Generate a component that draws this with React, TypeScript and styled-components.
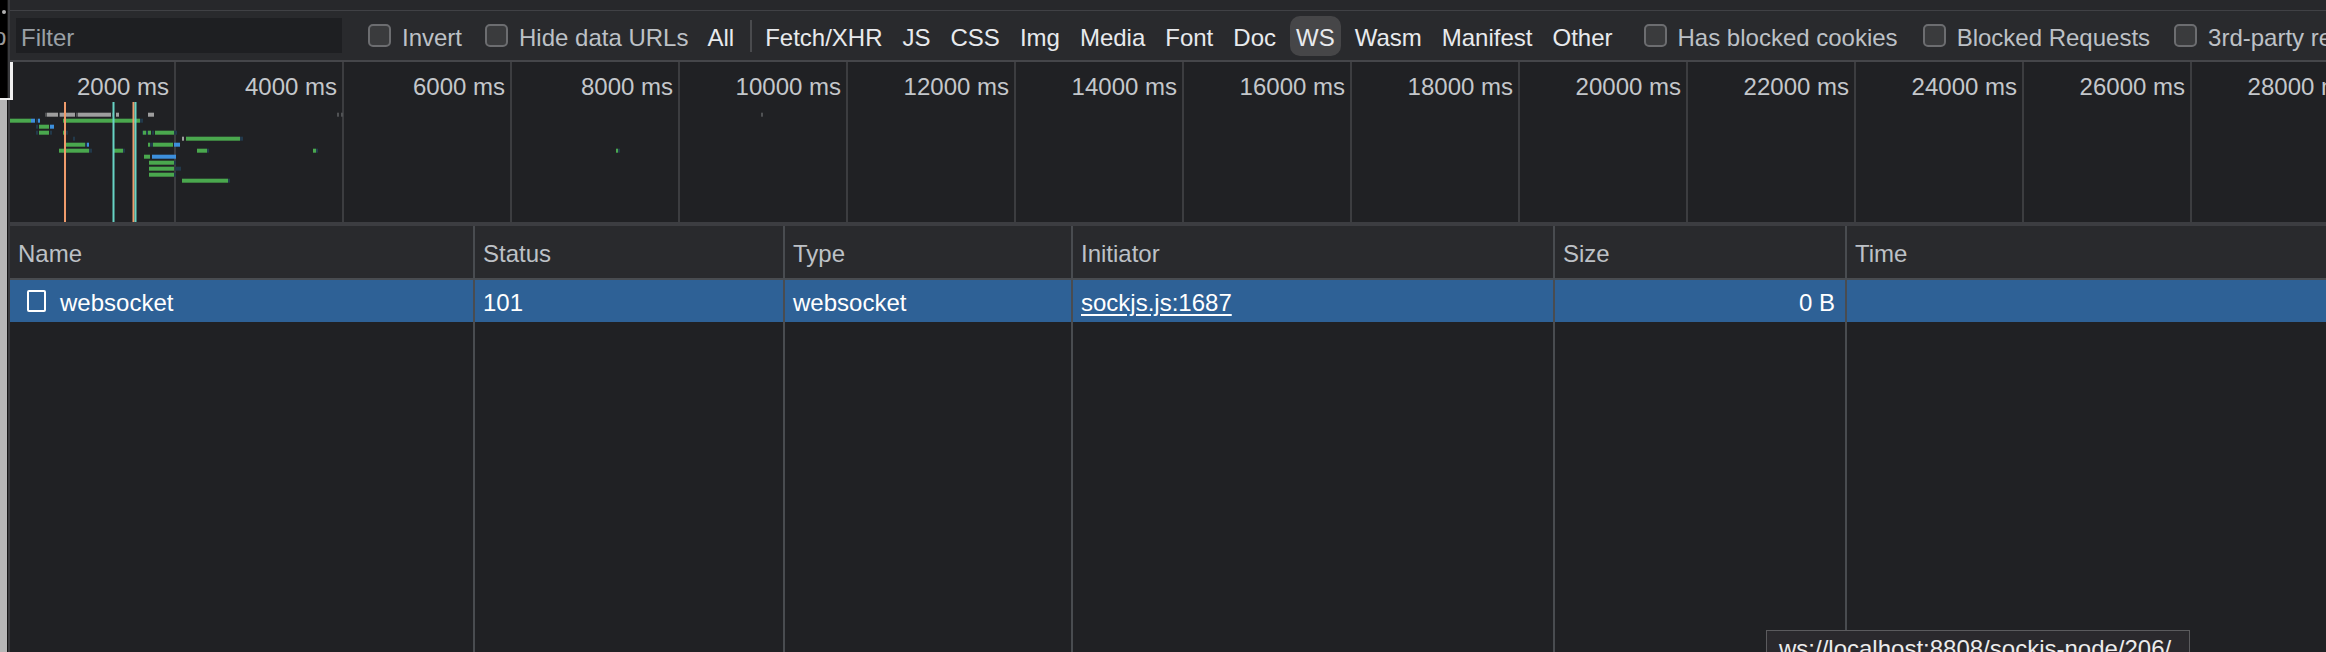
import React from 'react';
import styled, { createGlobalStyle } from 'styled-components';

const Global = createGlobalStyle`
  html, body { margin: 0; padding: 0; background: #202124; overflow: hidden; }
  body { width: 2326px; height: 652px; font-family: 'Liberation Sans', Arial, sans-serif; font-size: 24px; }
  #root { height: 652px; }
  * { box-sizing: border-box; }
`;

const Page = styled.div`
  position: relative;
  display: flex;
  width: 2326px;
  height: 652px;
  overflow: hidden;
`;

const Strip = styled.div`
  position: relative;
  flex: none;
  width: 7px;
  display: flex;
  flex-direction: column;
  background: #b7b7b7;
`;

const StripTop = styled.div`
  position: relative;
  height: 100px;
  background: #000;
  overflow: hidden;
`;

const StripGlyph = styled.span`
  position: absolute;
  left: -7px;
  top: 25px;
  line-height: 24px;
  color: #9a9a9a;
`;

const StripDot = styled.span`
  position: absolute;
  left: 2px;
  top: 10px;
  width: 4px;
  height: 4px;
  border-radius: 50%;
  background: #b0b0b0;
`;

const FocusBracket = styled.div`
  position: absolute;
  left: 0;
  top: 62px;
  width: 13px;
  height: 38px;
  border-right: 3px solid #f0f0f0;
  border-bottom: 2px solid #f0f0f0;
  z-index: 3;
`;

const Seam = styled.div`
  flex: none;
  width: 3px;
  background: linear-gradient(90deg, #161616 0 1px, #3a3b3e 1px);
`;

const Panel = styled.div`
  flex: 1;
  min-width: 0;
  display: flex;
  flex-direction: column;
  background: #202124;
`;

const TopBar = styled.div`
  flex: none;
  height: 11px;
  background: #27282b;
  border-bottom: 1px solid #404145;
`;

const Toolbar = styled.div`
  flex: none;
  height: 51px;
  display: flex;
  align-items: center;
  padding-left: 6px;
  background: #292a2d;
  border-bottom: 2px solid #45464a;
  white-space: nowrap;
`;

const FilterBox = styled.div`
  flex: none;
  width: 326px;
  height: 35px;
  margin-right: 26px;
  padding: 4px 0 0 5px;
  display: flex;
  align-items: center;
  background: #1e1f22;
  color: #9aa0a6;
`;

const CheckLabel = styled.label<{ $after: number }>`
  flex: none;
  display: flex;
  align-items: center;
  gap: 11px;
  margin-right: ${(p) => p.$after}px;
  color: #bdc1c6;
`;

const Caption = styled.span`
  display: block;
  padding-top: 4px;
`;

const Box = styled.span`
  width: 23px;
  height: 23px;
  border: 2px solid #6c6d70;
  border-radius: 5px;
  background: #3a3b3d;
`;

const TypeButton = styled.span<{ $active?: boolean; $after?: number }>`
  flex: none;
  height: 40px;
  padding: 4px 6px 0;
  display: flex;
  align-items: center;
  border-radius: 10px;
  margin-right: ${(p) => p.$after ?? 8}px;
  background: ${(p) => (p.$active ? '#464648' : 'transparent')};
  color: #e8eaed;
`;

const Separator = styled.span`
  flex: none;
  width: 2px;
  height: 32px;
  margin: 0 7px 0 10px;
  background: #4a4b4e;
`;

const Overview = styled.div`
  position: relative;
  flex: none;
  height: 160px;
  display: flex;
  overflow: hidden;
  background: #202124;
`;

const TimeCell = styled.div<{ $w: number }>`
  flex: none;
  width: ${(p) => p.$w}px;
  height: 100%;
  padding: 11px 5px 0 0;
  text-align: right;
  line-height: 28px;
  white-space: nowrap;
  color: #c4c7cb;
  border-right: 2px solid #3c3d40;
`;

const Chart = styled.svg`
  position: absolute;
  left: 0;
  top: 0;
`;

const Divider = styled.div`
  flex: none;
  height: 4px;
  background: #3c3d41;
`;

const Table = styled.div`
  flex: 1;
  display: flex;
  flex-direction: column;
  min-height: 0;
`;

const Row = styled.div<{ $kind: 'head' | 'data' | 'fill' }>`
  display: grid;
  grid-template-columns: 463px 310px 288px 482px 292px 1fr;
  flex: ${(p) => (p.$kind === 'fill' ? '1' : 'none')};
  height: ${(p) => (p.$kind === 'head' ? '54px' : p.$kind === 'data' ? '42px' : 'auto')};
  background: ${(p) => (p.$kind === 'head' ? '#292a2d' : p.$kind === 'data' ? '#2e6196' : '#202124')};
  border-bottom: ${(p) => (p.$kind === 'head' ? '2px solid #494c50' : 'none')};
  color: ${(p) => (p.$kind === 'head' ? '#bdc1c6' : '#ffffff')};
`;

const Cell = styled.div<{ $right?: boolean }>`
  display: flex;
  align-items: center;
  justify-content: ${(p) => (p.$right ? 'flex-end' : 'flex-start')};
  padding: ${(p) => (p.$right ? '3px 10px 0 8px' : '3px 8px 0')};
  white-space: nowrap;
  overflow: hidden;
  &:not(:first-child) { border-left: 2px solid #494c50; }
`;

const DocIcon = styled.span`
  flex: none;
  width: 19px;
  height: 22px;
  margin: -3px 14px 0 9px;
  border: 2px solid #ffffff;
  border-radius: 2px;
`;

const Link = styled.span`
  text-decoration: underline;
  text-underline-offset: 3px;
`;

const Tooltip = styled.div`
  position: absolute;
  left: 1766px;
  top: 630px;
  width: 424px;
  padding: 4px 12px;
  line-height: 28px;
  white-space: nowrap;
  background: #2a292d;
  border: 1px solid #5b5b5e;
  color: #ececec;
  z-index: 4;
`;

type Kind = 'g' | 'b' | 'k' | 'd' | 't';
const colors: Record<Kind, string> = {
  g: '#4aa84e',
  b: '#3d8fdc',
  k: '#9e9e9e',
  d: '#22394b',
  t: '#505254',
};

const bars: [number, number, number, Kind][] = [
  [0, 45, 47, 't'], [0, 47, 58, 'k'], [0, 59, 60, 't'], [0, 60, 75, 'k'], [0, 76, 78, 't'], [0, 78, 111, 'k'],
  [0, 112, 113, 't'], [0, 116, 119, 'k'], [0, 148, 154, 'k'], [0, 337, 339, 't'], [0, 341, 343, 't'], [0, 761, 763, 't'],
  [1, 9, 31, 'g'], [1, 31, 35, 'b'], [1, 36, 38, 'd'], [1, 38, 40, 'b'], [1, 63, 140, 'g'], [1, 140, 143, 'd'],
  [2, 36, 38, 'd'], [2, 39, 49, 'g'], [2, 50, 54, 'b'],
  [3, 36, 38, 'd'], [3, 39, 49, 'g'], [3, 50, 52, 'd'], [3, 63, 65, 'g'], [3, 65, 68, 'd'], [3, 142, 143, 'd'],
  [3, 143, 146, 'g'], [3, 146, 148, 'd'], [3, 148, 151, 'g'], [3, 152, 154, 'd'], [3, 155, 174, 'g'], [3, 174, 177, 'd'],
  [4, 73, 75, 'd'], [4, 182, 184, 'k'], [4, 186, 240, 'g'], [4, 240, 243, 'd'],
  [5, 64, 85, 'g'], [5, 85, 87, 'd'], [5, 87, 89, 'b'], [5, 148, 150, 'g'], [5, 150, 153, 'd'], [5, 153, 173, 'g'], [5, 174, 180, 'b'],
  [6, 59, 89, 'g'], [6, 89, 92, 'd'], [6, 114, 123, 'g'], [6, 123, 125, 'd'], [6, 197, 207, 'g'], [6, 207, 209, 'd'],
  [6, 313, 316, 'g'], [6, 316, 318, 'd'], [6, 616, 618, 'g'], [6, 618, 620, 'd'],
  [7, 144, 150, 'g'], [7, 152, 176, 'b'],
  [8, 149, 174, 'g'], [8, 174, 176, 'd'],
  [9, 149, 174, 'g'], [9, 175, 181, 'd'],
  [10, 149, 174, 'g'], [10, 174, 176, 'd'],
  [11, 182, 228, 'g'], [11, 228, 230, 'd'],
];

const markers: [number, string][] = [
  [64, '#ef9b6b'],
  [112.5, '#67d3c4'],
  [132.5, '#ef9b6b'],
  [134.5, '#67d3c4'],
];

const labels = Array.from({ length: 15 }, (_, i) => `${(i + 1) * 2000} ms`);

const types = ['Fetch/XHR', 'JS', 'CSS', 'Img', 'Media', 'Font', 'Doc', 'WS', 'Wasm', 'Manifest', 'Other'];

const columns = ['Name', 'Status', 'Type', 'Initiator', 'Size', 'Time'];

export default function App() {
  return (
    <>
      <Global />
      <Page>
        <Strip>
          <StripTop>
            <StripDot />
            <StripGlyph>p</StripGlyph>
          </StripTop>
        </Strip>
        <FocusBracket />
        <Seam />
        <Panel>
          <TopBar />
          <Toolbar>
            <FilterBox>Filter</FilterBox>
            <CheckLabel $after={23}><Box /><Caption>Invert</Caption></CheckLabel>
            <CheckLabel $after={13}><Box /><Caption>Hide data URLs</Caption></CheckLabel>
            <TypeButton $after={0}>All</TypeButton>
            <Separator />
            {types.map((t) => (
              <TypeButton key={t} $active={t === 'WS'} $after={t === 'Other' ? 25 : 8}>{t}</TypeButton>
            ))}
            <CheckLabel $after={25}><Box /><Caption>Has blocked cookies</Caption></CheckLabel>
            <CheckLabel $after={24}><Box /><Caption>Blocked Requests</Caption></CheckLabel>
            <CheckLabel $after={0}><Box /><Caption>3rd-party requests</Caption></CheckLabel>
          </Toolbar>
          <Overview>
            {labels.map((l, i) => (
              <TimeCell key={l} $w={i === 0 ? 166 : 168}>{l}</TimeCell>
            ))}
            <Chart width={2316} height={160} viewBox="10 62 2316 160">
              {bars.map(([r, x1, x2, k], i) => (
                <rect key={i} x={x1} y={112.7 + r * 6} width={x2 - x1} height={4} fill={colors[k]} />
              ))}
              {markers.map(([x, c], i) => (
                <rect key={`m${i}`} x={x} y={102} width={2} height={120} fill={c} />
              ))}
            </Chart>
          </Overview>
          <Divider />
          <Table>
            <Row $kind="head">
              {columns.map((c) => (
                <Cell key={c}>{c}</Cell>
              ))}
            </Row>
            <Row $kind="data">
              <Cell><DocIcon />websocket</Cell>
              <Cell>101</Cell>
              <Cell>websocket</Cell>
              <Cell><Link>sockjs.js:1687</Link></Cell>
              <Cell $right>0 B</Cell>
              <Cell />
            </Row>
            <Row $kind="fill">
              {columns.map((c) => (
                <Cell key={c} />
              ))}
            </Row>
          </Table>
        </Panel>
        <Tooltip>ws://localhost:8808/sockjs-node/206/</Tooltip>
      </Page>
    </>
  );
}
